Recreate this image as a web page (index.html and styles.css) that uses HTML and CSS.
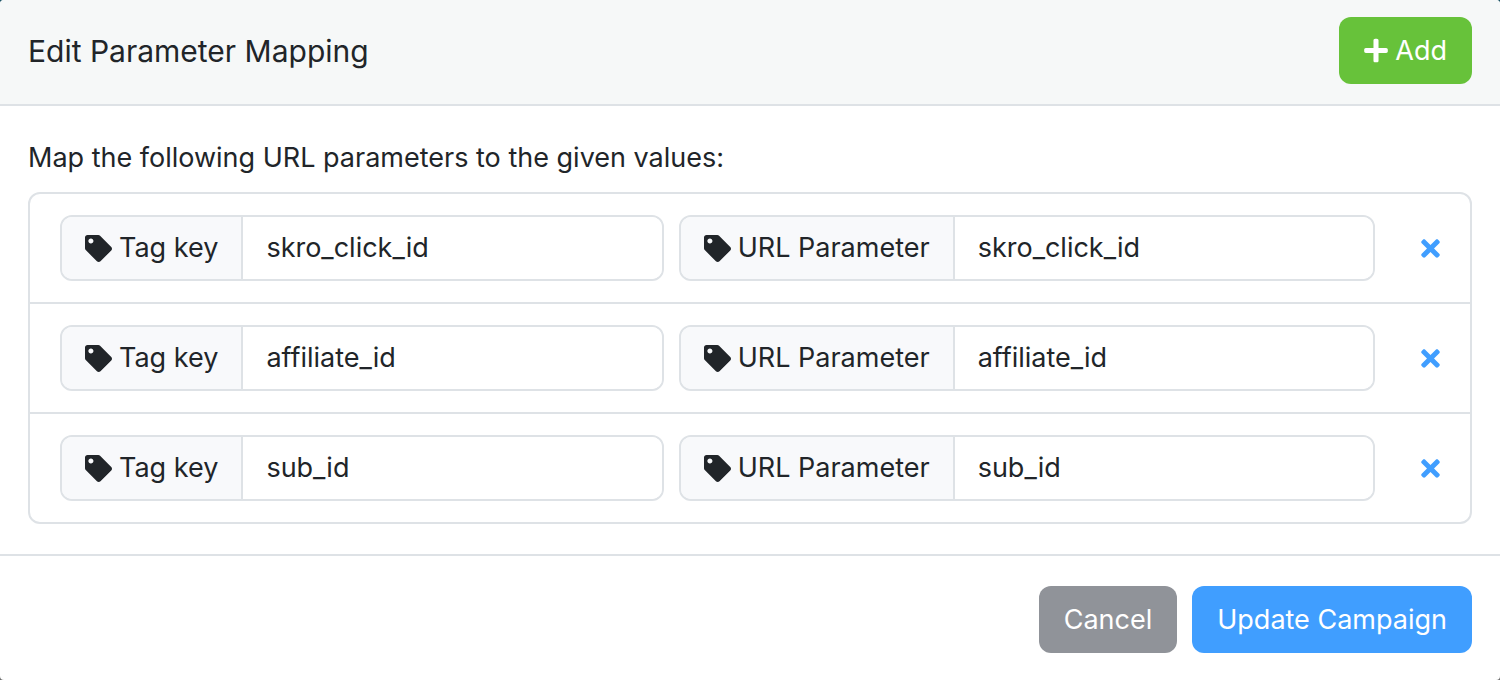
FILE: index.html
```html
<!DOCTYPE html>
<html lang="en">
    <head>
        <meta charset="utf-8">
        <title>Edit Parameter Mapping</title>
        <link rel="stylesheet" href="styles.css">
    </head>
    <body>
        <!-- icons shared by the rows -->
        <svg class="sprite" aria-hidden="true">
            <symbol id="tag" viewBox="0 0 512 512">
                <path d="M0 252.118V48C0 21.49 21.49 0 48 0h204.118a48 48 0 0 1 33.941 14.059l211.882 211.882c18.744 18.745 18.744 49.137 0 67.882L293.823 497.941c-18.745 18.744-49.137 18.744-67.882 0L14.059 286.059A48 48 0 0 1 0 252.118zM112 64c-26.51 0-48 21.49-48 48s21.49 48 48 48 48-21.49 48-48-21.49-48-48-48z"/>
            </symbol>
            <symbol id="times" viewBox="0 0 352 512">
                <path d="M242.72 256l100.07-100.07c12.28-12.28 12.28-32.19 0-44.48l-22.24-22.24c-12.28-12.28-32.19-12.28-44.48 0L176 189.28 75.93 89.21c-12.28-12.28-32.19-12.28-44.48 0L9.21 111.45c-12.28 12.28-12.28 32.19 0 44.48L109.28 256 9.21 356.07c-12.28 12.28-12.28 32.19 0 44.48l22.24 22.24c12.28 12.28 32.2 12.28 44.48 0L176 322.72l100.07 100.07c12.28 12.28 32.2 12.28 44.48 0l22.24-22.24c12.28-12.28 12.28-32.19 0-44.48L242.72 256z"/>
            </symbol>
        </svg>
        <form class="modal">
            <div class="modal-header">
                <h5 class="modal-title">Edit Parameter Mapping</h5>
                <button type="button" class="btn btn-success">
                    <svg class="icon icon-plus" viewBox="0 0 448 512" aria-hidden="true"><path d="M416 208H272V64c0-17.67-14.33-32-32-32h-32c-17.67 0-32 14.33-32 32v144H32c-17.67 0-32 14.33-32 32v32c0 17.67 14.33 32 32 32h144v144c0 17.67 14.33 32 32 32h32c17.67 0 32-14.33 32-32V304h144c17.67 0 32-14.33 32-32v-32c0-17.67-14.33-32-32-32z"/></svg>
                    Add
                </button>
            </div>
            <div class="modal-body">
                <p class="intro">Map the following URL parameters to the given values:</p>
                <ul class="list">
                    <li class="list-item">
                        <div class="input-group">
                            <label class="input-label" for="key1"><svg class="icon"><use href="#tag"/></svg>Tag key</label>
                            <input class="input" type="text" id="key1" value="skro_click_id">
                        </div>
                        <div class="input-group">
                            <label class="input-label" for="param1"><svg class="icon"><use href="#tag"/></svg>URL Parameter</label>
                            <input class="input" type="text" id="param1" value="skro_click_id">
                        </div>
                        <button type="button" class="remove" aria-label="Remove"><svg class="icon icon-times"><use href="#times"/></svg></button>
                    </li>
                    <li class="list-item">
                        <div class="input-group">
                            <label class="input-label" for="key2"><svg class="icon"><use href="#tag"/></svg>Tag key</label>
                            <input class="input" type="text" id="key2" value="affiliate_id">
                        </div>
                        <div class="input-group">
                            <label class="input-label" for="param2"><svg class="icon"><use href="#tag"/></svg>URL Parameter</label>
                            <input class="input" type="text" id="param2" value="affiliate_id">
                        </div>
                        <button type="button" class="remove" aria-label="Remove"><svg class="icon icon-times"><use href="#times"/></svg></button>
                    </li>
                    <li class="list-item">
                        <div class="input-group">
                            <label class="input-label" for="key3"><svg class="icon"><use href="#tag"/></svg>Tag key</label>
                            <input class="input" type="text" id="key3" value="sub_id">
                        </div>
                        <div class="input-group">
                            <label class="input-label" for="param3"><svg class="icon"><use href="#tag"/></svg>URL Parameter</label>
                            <input class="input" type="text" id="param3" value="sub_id">
                        </div>
                        <button type="button" class="remove" aria-label="Remove"><svg class="icon icon-times"><use href="#times"/></svg></button>
                    </li>
                </ul>
            </div>
            <div class="modal-footer">
                <button type="button" class="btn btn-secondary">Cancel</button>
                <button type="submit" class="btn btn-primary">Update Campaign</button>
            </div>
        </form>
    </body>
</html>
```
FILE: styles.css
```css
* {
    box-sizing: border-box;
}
body {
    margin: 0;
    background: linear-gradient(#1d5566, #6b6b6b);
    color: #212529;
    font-family: Inter, "Liberation Sans", sans-serif;
    font-size: 27px;
    line-height: 40px;
}
.sprite {
    display: none;
}
.modal {
    background: #fff;
    border-radius: 4px;
    overflow: hidden;
}
.modal-header {
    display: flex;
    align-items: center;
    justify-content: space-between;
    padding: 17px 28px 20px;
    background: #f6f8f8;
    border-bottom: 2px solid #dee2e6;
}
.modal-title {
    margin: 0;
    font-size: 30px;
    font-weight: 400;
}
.modal-body {
    padding: 32px 28px 30px;
}
.intro {
    margin: 0 0 14px;
}
.list {
    margin: 0;
    padding: 0;
    list-style: none;
    border: 2px solid #dee2e6;
    border-radius: 12px;
}
.list-item {
    display: flex;
    align-items: center;
    gap: 15px;
    padding: 21px 30px;
}
.list-item + .list-item {
    border-top: 2px solid #dee2e6;
}
.input-group {
    display: flex;
    flex: 1 1 auto;
    border: 2px solid #dee2e6;
    border-radius: 12px;
    overflow: hidden;
}
.input-label {
    display: flex;
    align-items: center;
    gap: 7px;
    padding: 11px 23px;
    background: #f8f9fb;
    border-right: 2px solid #dee2e6;
    white-space: nowrap;
}
.input {
    flex: 1 1 200px;
    width: 200px;
    min-width: 0;
    padding: 11px 23px;
    border: 0;
    outline: 0;
    background: #fff;
    color: inherit;
    font: inherit;
}
.icon {
    width: 27px;
    height: 27px;
    flex: none;
    fill: currentColor;
}
.icon-plus {
    width: 24px;
}
.icon-times {
    width: 19px;
    display: block;
}
.remove {
    margin-left: 31px;
    padding: 0;
    border: 0;
    background: none;
    color: #409eff;
    cursor: pointer;
}
.btn {
    display: flex;
    align-items: center;
    gap: 7px;
    min-height: 67px;
    padding: 13px 25px;
    border: 0;
    border-radius: 12px;
    color: #fff;
    font: inherit;
    cursor: pointer;
}
.btn-success {
    background: #67c23a;
}
.btn-secondary {
    background: #909399;
}
.btn-primary {
    background: #409eff;
}
.modal-footer {
    display: flex;
    justify-content: flex-end;
    gap: 15px;
    padding: 30px 28px 27px;
    border-top: 2px solid #dee2e6;
}
```
